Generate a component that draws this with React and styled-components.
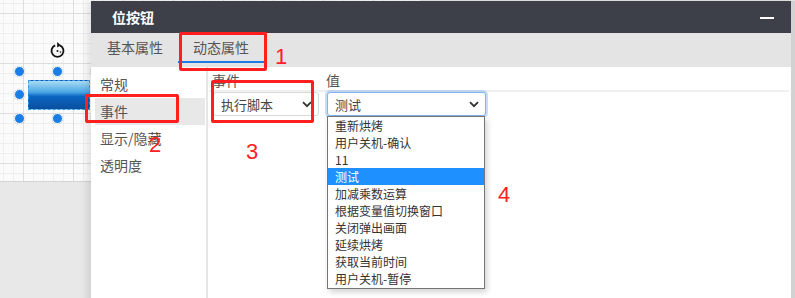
import React from 'react';
import styled, { createGlobalStyle } from 'styled-components';

const GlobalStyle = createGlobalStyle`
    body {
        margin: 0;
        overflow: hidden;
        font-family: "Noto Sans CJK SC", "Noto Sans", sans-serif;
    }
`;

const Page = styled.div`
    position: relative;
    width: 795px;
    height: 298px;
    overflow: hidden;
    background: #e8e8e8;
`;

const Canvas = styled.div`
    position: absolute;
    left: 0;
    top: 0;
    width: 420px;
    height: 181px;
    background-color: #fbfbfb;
    background-image:
        linear-gradient(to right, #dedede 1px, transparent 1px),
        linear-gradient(to bottom, #dedede 1px, transparent 1px),
        linear-gradient(to right, #efefef 1px, transparent 1px),
        linear-gradient(to bottom, #efefef 1px, transparent 1px);
    background-size: 50px 50px, 50px 50px, 10px 10px, 10px 10px;
    background-position: 23px 13px, 23px 13px, 3px 3px, 3px 3px;
    border-bottom: 1px solid #d4d4d4;
`;

const Widget = styled.div`
    position: absolute;
    left: 28px;
    top: 80px;
    width: 62px;
    height: 30px;
    box-sizing: border-box;
    border: 1px dashed #3a9ae8;
    background: linear-gradient(to bottom, #a9dcf6 0%, #4aa6e4 40%, #0a66c2 55%, #0a4f9e 100%);
`;

const Handle = styled.div`
    position: absolute;
    width: 9px;
    height: 9px;
    margin: -5px 0 0 -5px;
    border-radius: 50%;
    background: #1a7ee6;
    border: 1px solid #fff;
    box-shadow: 0 0 1px rgba(0, 0, 0, 0.3);
`;

const RotateIcon = styled.svg`
    position: absolute;
    left: 49px;
    top: 41px;
`;

const Dialog = styled.div`
    position: absolute;
    left: 91px;
    top: 1px;
    width: 700px;
    height: 320px;
    display: flex;
    flex-direction: column;
    background: #e4e4e4;
    box-shadow: -3px 0 8px rgba(0, 0, 0, 0.12);
    border-right: 4px solid #d2d2d2;
`;

const Header = styled.div`
    height: 32px;
    flex: none;
    background: #3d4049;
    color: #fff;
    display: flex;
    align-items: center;
    justify-content: space-between;
    padding: 0 17px 0 21px;
    font-size: 14px;
    font-weight: 600;
`;

const MinimizeBar = styled.span`
    width: 14px;
    height: 2px;
    background: #fff;
    margin-top: 2px;
`;

const TabBar = styled.div`
    height: 34px;
    flex: none;
    display: flex;
    align-items: stretch;
    padding-left: 1px;
`;

const Tab = styled.div`
    width: 86px;
    display: flex;
    align-items: center;
    justify-content: center;
    font-size: 14px;
    color: #555;
    box-sizing: border-box;
    padding-bottom: 1px;
    border-bottom: 2px solid ${(p) => (p.active ? '#1a7ee6' : 'transparent')};
    margin-bottom: 4px;
`;

const Body = styled.div`
    flex: 1;
    display: flex;
    background: #fff;
`;

const Nav = styled.div`
    width: 117px;
    flex: none;
    padding: 4px 1px 0 4px;
    box-sizing: border-box;
    border-right: 2px solid #e6e6e6;
`;

const NavItem = styled.div`
    height: 27px;
    line-height: 27px;
    padding-left: 5px;
    font-size: 14px;
    color: #555;
    background: ${(p) => (p.active ? '#e8e8e8' : 'transparent')};
`;

const Content = styled.div`
    flex: 1;
    position: relative;
    padding: 3px 2px 0 1px;
`;

const HeadRow = styled.div`
    display: flex;
    height: 20px;
    padding-left: 3px;
    border-bottom: 2px solid #f0f0f0;
    font-size: 14px;
    color: #555;
    line-height: 20px;
`;

const HeadCell = styled.div`
    width: ${(p) => p.w}px;
`;

const FieldRow = styled.div`
    display: flex;
    padding-left: 4px;
`;

const SelectBox = styled.div`
    position: relative;
    width: ${(p) => p.w}px;
    height: 24px;
    box-sizing: border-box;
    margin-right: ${(p) => p.gap || 0}px;
    border: 1px solid ${(p) => (p.focus ? '#7fb4ec' : '#d9d9d9')};
    border-radius: 3px;
    box-shadow: ${(p) => (p.focus ? '0 0 0 2px rgba(100, 160, 230, 0.35)' : 'none')};
    display: flex;
    align-items: center;
    justify-content: space-between;
    padding: 0 6px 0 7px;
    font-size: 13px;
    color: #444;
    background: #fff;
`;

const Chevron = styled.svg`
    flex: none;
`;

const DropList = styled.ul`
    position: absolute;
    left: 119px;
    top: 49px;
    width: 158px;
    margin: 0;
    padding: 0 0 1px;
    list-style: none;
    box-sizing: border-box;
    border: 1px solid #767676;
    background: #fff;
    box-shadow: 2px 3px 6px rgba(0, 0, 0, 0.18);
`;

const DropItem = styled.li`
    height: 17px;
    line-height: 17px;
    padding-left: 7px;
    font-size: 12px;
    color: ${(p) => (p.selected ? '#fff' : '#333')};
    background: ${(p) => (p.selected ? '#1e90ff' : 'transparent')};
    white-space: nowrap;
`;

const Mark = styled.div`
    position: absolute;
    left: ${(p) => p.x}px;
    top: ${(p) => p.y}px;
    width: ${(p) => p.w}px;
    height: ${(p) => p.h}px;
    box-sizing: border-box;
    border: 3px solid #ff1f1f;
    border-radius: 2px;
    pointer-events: none;
`;

const Number = styled.div`
    position: absolute;
    left: ${(p) => p.x}px;
    top: ${(p) => p.y}px;
    font-family: "Liberation Sans", Arial, sans-serif;
    font-size: 22px;
    line-height: 22px;
    color: #ff2222;
`;

const navItems = ['常规', '事件', '显示/隐藏', '透明度'];

const scripts = [
    '重新烘烤',
    '用户关机-确认',
    '11',
    '测试',
    '加减乘数运算',
    '根据变量值切换窗口',
    '关闭弹出画面',
    '延续烘烤',
    '获取当前时间',
    '用户关机-暂停',
];

const handles = [
    [19, 71], [57, 71], [19, 94], [19, 118], [57, 118], [95, 71], [95, 118],
];

function ChevronDown() {
    return (
        <Chevron width="10" height="7" viewBox="0 0 10 7">
            <path d="M1 1.2 L5 5.2 L9 1.2" fill="none" stroke="#333" strokeWidth="1.8" />
        </Chevron>
    );
}

export default function App() {
    return (
        <>
            <GlobalStyle />
            <Page>
                <Canvas>
                    <RotateIcon width="17" height="18" viewBox="0 0 17 18">
                        <path d="M6.2 4.3 A6 6 0 1 0 10.8 4.3" fill="none" stroke="#111" strokeWidth="1.8" />
                        <path d="M8.2 1 L11.6 4.2 L8.2 6.6 Z" fill="#111" />
                        <circle cx="8.5" cy="10" r="1" fill="#111" />
                        <circle cx="11.5" cy="11" r="0.8" fill="#111" />
                    </RotateIcon>
                    <Widget />
                    {handles.map(([x, y], i) => (
                        <Handle key={i} style={{ left: x, top: y }} />
                    ))}
                </Canvas>

                <Dialog>
                    <Header>
                        <span>位按钮</span>
                        <MinimizeBar />
                    </Header>
                    <TabBar>
                        <Tab>基本属性</Tab>
                        <Tab active>动态属性</Tab>
                    </TabBar>
                    <Body>
                        <Nav>
                            {navItems.map((n) => (
                                <NavItem key={n} active={n === '事件'}>{n}</NavItem>
                            ))}
                        </Nav>
                        <Content>
                            <HeadRow>
                                <HeadCell w={114}>事件</HeadCell>
                                <HeadCell w={100}>值</HeadCell>
                            </HeadRow>
                            <FieldRow>
                                <SelectBox w={106} gap={8}>
                                    执行脚本
                                    <ChevronDown />
                                </SelectBox>
                                <SelectBox w={159} focus>
                                    测试
                                    <ChevronDown />
                                </SelectBox>
                            </FieldRow>
                            <DropList>
                                {scripts.map((s) => (
                                    <DropItem key={s} selected={s === '测试'}>{s}</DropItem>
                                ))}
                            </DropList>
                        </Content>
                    </Body>
                </Dialog>

                <Mark x={179} y={32} w={88} h={39} />
                <Number x={275} y={46}>1</Number>
                <Mark x={85} y={94} w={94} h={29} />
                <Number x={149} y={134}>2</Number>
                <Mark x={211} y={80} w={103} h={43} />
                <Number x={246} y={141}>3</Number>
                <Number x={498} y={184}>4</Number>
            </Page>
        </>
    );
}
